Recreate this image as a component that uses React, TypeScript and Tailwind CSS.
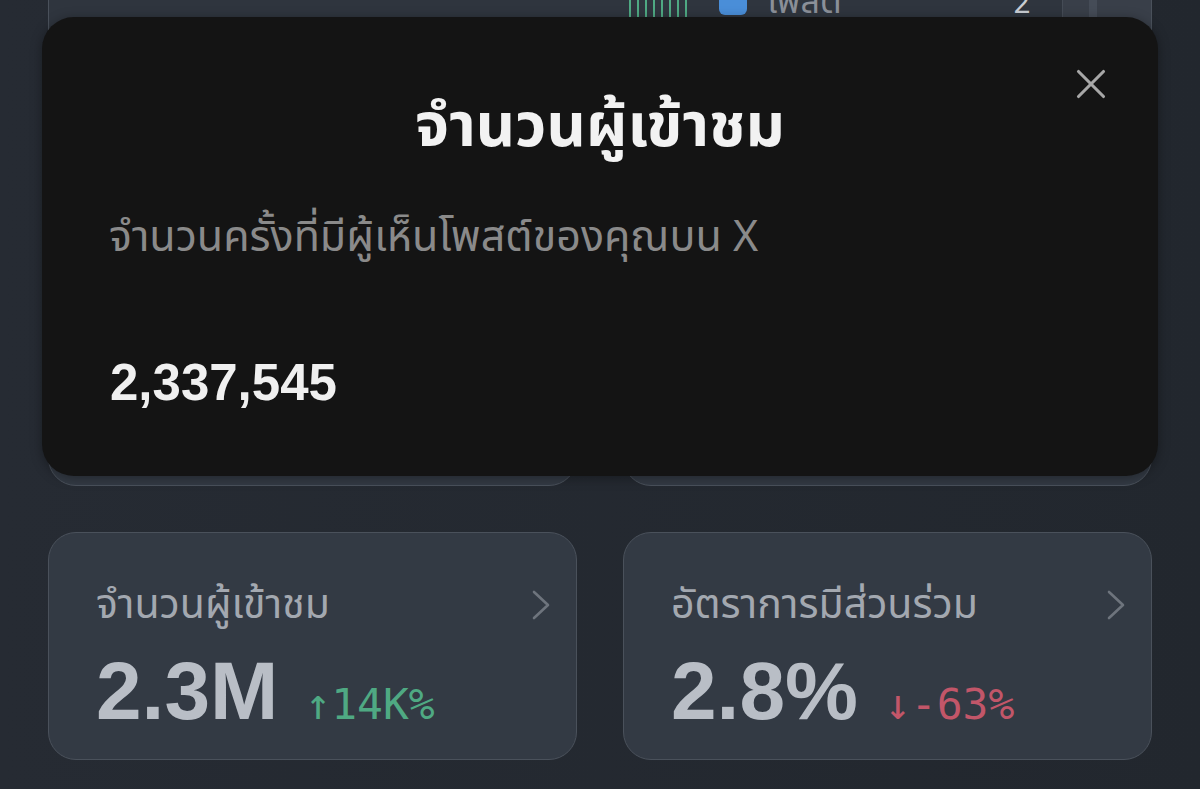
import { X } from "lucide-react"

const thai = "font-['Noto_Sans_Thai','Noto_Sans','Liberation_Sans',sans-serif]"

// tiny bar sparkline in the chart card header
const bars = [4, 10, 18, 18, 18, 18, 18, 14]

function Chevron() {
  return (
    <svg width="20" height="30" viewBox="0 0 20 30" fill="none" className="text-[#6e747d]">
      <path d="M3 2 L17 15 L3 28" stroke="currentColor" strokeWidth="2.6" strokeLinecap="round" strokeLinejoin="round" />
    </svg>
  )
}

function StatCard({
  label,
  value,
  delta,
  up,
}: {
  label: string
  value: string
  delta: string
  up: boolean
}) {
  return (
    <div className="flex h-[228px] flex-col rounded-[28px] border border-[#4a515b] bg-[#333a44] pl-[47px] pr-[25px] pt-[46px]">
      <div className="flex items-center justify-between">
        <span className={`${thai} text-[41px] leading-[52px] text-[#a3a8b0]`}>{label}</span>
        <Chevron />
      </div>
      <div className="mt-[19px] flex items-baseline gap-[27px]">
        <span className="font-['Liberation_Sans',sans-serif] text-[82px] font-bold leading-none text-[#b9bec6]">
          {value}
        </span>
        <span
          className={`font-['DejaVu_Sans_Mono',monospace] text-[43px] leading-none ${
            up ? "text-[#4fa983]" : "text-[#c25669]"
          }`}
        >
          {up ? "↑" : "↓"}
          {delta}
        </span>
      </div>
    </div>
  )
}

export default function App() {
  return (
    <div className="relative h-[789px] w-[1200px] overflow-hidden bg-gradient-to-r from-[#262b33] to-[#22272e]">
      <div className="flex flex-col gap-[46px] px-12">
        {/* chart card, scrolled mostly out of view */}
        <div className="-mt-[30px] flex h-[270px] overflow-hidden rounded-[28px] border border-[#4a515b] bg-[#2f353e]">
          <div className="flex flex-1 items-start pl-[580px] pt-[10px]">
            <div className="flex h-[37px] items-end gap-[6px]">
              {bars.map((h, i) => (
                <div
                  key={i}
                  className="w-[2px] bg-[#4fa983]"
                  style={{ height: `${h + 19}px` }}
                />
              ))}
            </div>
            <div className="ml-[32px] mt-[6px] h-[28px] w-[28px] rounded-[6px] bg-[#4a8ed8]" />
            <span className={`${thai} ml-[20px] mt-[2px] text-[34px] leading-[40px] text-[#8b9099]`}>
              โพสต์
            </span>
            <span className="ml-auto mr-[32px] mt-[2px] font-['Roboto',sans-serif] text-[30px] leading-[40px] text-[#c9cdd3]">
              2
            </span>
          </div>
          <div className="flex w-[89px] border-l border-[#454c56] bg-[#393f49]">
            <div className="ml-[26px] w-[8px] bg-[#454c57]" />
          </div>
        </div>

        {/* summary cards hidden behind the sheet */}
        <div className="grid grid-cols-2 gap-[46px]">
          <div className="h-[200px] rounded-[28px] border border-[#4a515b] bg-[#333a44]" />
          <div className="h-[200px] rounded-[28px] border border-[#4a515b] bg-[#333a44]" />
        </div>

        <div className="grid grid-cols-2 gap-[46px]">
          <StatCard label="จำนวนผู้เข้าชม" value="2.3M" delta="14K%" up />
          <StatCard label="อัตราการมีส่วนร่วม" value="2.8%" delta="-63%" up={false} />
        </div>
      </div>

      {/* info sheet */}
      <div className="absolute left-[42px] top-[17px] h-[459px] w-[1116px] rounded-[32px] bg-[#141414] shadow-[0_2px_12px_rgba(0,0,0,0.35)]">
        <button className="absolute right-[42px] top-[42px] text-[#a7a7a7]">
          <X className="h-[50px] w-[50px]" strokeWidth={1.5} />
        </button>
        <h2 className={`${thai} pt-[75px] text-center text-[61px] font-bold leading-[70px] text-[#f2f2f2]`}>
          จำนวนผู้เข้าชม
        </h2>
        <p className={`${thai} mt-[48px] pl-[67px] text-[43px] leading-[56px] text-[#8a8a8a]`}>
          จำนวนครั้งที่มีผู้เห็นโพสต์ของคุณบน X
        </p>
        <p className="mt-[91px] pl-[68px] font-['Liberation_Sans',sans-serif] text-[51px] font-bold leading-none text-[#f0f0f0]">
          2,337,545
        </p>
      </div>
    </div>
  )
}
